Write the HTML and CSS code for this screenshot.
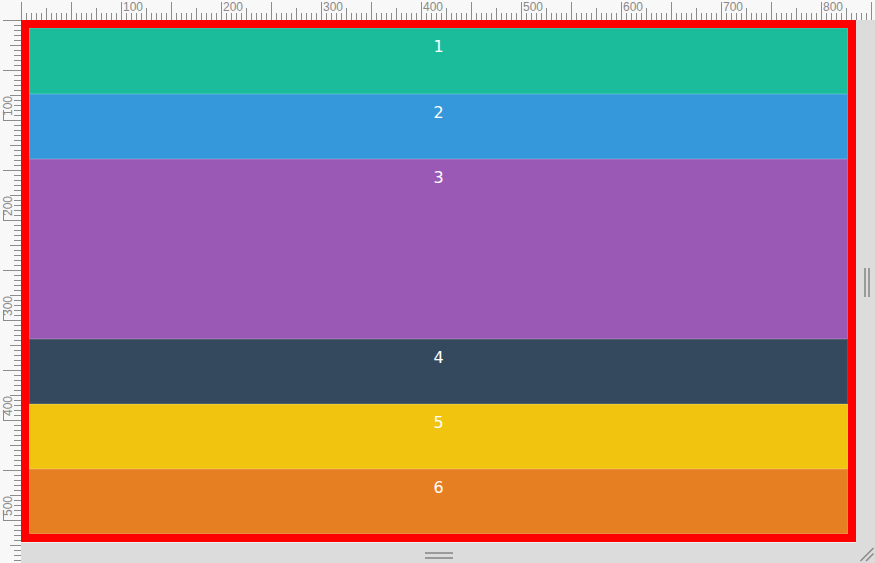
FILE: index.html
```html
<!DOCTYPE html>
<html lang="en">
<head>
<meta charset="utf-8">
<title>Flex rows</title>
<link rel="stylesheet" href="styles.css">
</head>
<body>
<div class="app">
  <div class="corner"></div>
  <div class="ruler-top">
    <span class="hlabel">100</span>
    <span class="hlabel">200</span>
    <span class="hlabel">300</span>
    <span class="hlabel">400</span>
    <span class="hlabel">500</span>
    <span class="hlabel">600</span>
    <span class="hlabel">700</span>
    <span class="hlabel">800</span>
  </div>
  <div class="ruler-left">
    <span class="vlabel">100</span>
    <span class="vlabel">200</span>
    <span class="vlabel">300</span>
    <span class="vlabel">400</span>
    <span class="vlabel">500</span>
  </div>
  <div class="stage">
    <div class="frame">
      <div class="item item-1">1</div>
      <div class="item item-2">2</div>
      <div class="item item-3">3</div>
      <div class="item item-4">4</div>
      <div class="item item-5">5</div>
      <div class="item item-6">6</div>
    </div>
    <div class="side-cell">
      <div class="vhandle"></div>
    </div>
    <div class="bottom-cell">
      <div class="hhandle"></div>
    </div>
    <div class="grip-cell">
      <svg class="grip" width="19" height="21" viewBox="0 0 19 21" aria-hidden="true">
        <line x1="4.5" y1="19" x2="17.5" y2="6" />
        <line x1="10" y1="19" x2="17.5" y2="11.5" />
      </svg>
    </div>
  </div>
</div>
</body>
</html>
```

FILE: styles.css
```css
html, body {
  margin: 0;
  padding: 0;
}

body {
  width: 875px;
  height: 563px;
  overflow: hidden;
  background: #dcdcdc;
  font-family: "Liberation Sans", Arial, sans-serif;
}

.app {
  display: grid;
  grid-template-columns: 21px 854px;
  grid-template-rows: 20px 543px;
  width: 875px;
  height: 563px;
}

.corner {
  background: #f8f8f8;
}

.ruler-top {
  display: flex;
  padding-left: 100px;
  background-color: #f8f8f8;
  background-image:
    repeating-linear-gradient(to right, #8c8c8c 0 1px, transparent 1px 50px),
    repeating-linear-gradient(to right, #8c8c8c 0 1px, transparent 1px 25px),
    repeating-linear-gradient(to right, #8c8c8c 0 1px, transparent 1px 5px);
  background-size: 100% 18px, 100% 12px, 100% 7px;
  background-position: left bottom, left bottom, left bottom;
  background-repeat: no-repeat;
  overflow: hidden;
}

.hlabel {
  flex: 0 0 100px;
  box-sizing: border-box;
  padding-left: 2px;
  font-size: 12px;
  line-height: 14px;
  color: #8a8a8a;
}

.ruler-left {
  display: flex;
  flex-direction: column;
  background-color: #f8f8f8;
  background-image:
    linear-gradient(to bottom, transparent 0 90px, #8c8c8c 90px 100px),
    repeating-linear-gradient(to bottom, #8c8c8c 0 1px, transparent 1px 50px),
    repeating-linear-gradient(to bottom, #8c8c8c 0 1px, transparent 1px 25px),
    repeating-linear-gradient(to bottom, #8c8c8c 0 1px, transparent 1px 5px);
  background-size: 1px 100px, 18px 100%, 11px 100%, 7px 100%;
  background-position: 3px 0, right top, right top, right top;
  background-repeat: repeat-y, no-repeat, no-repeat, no-repeat;
  overflow: hidden;
}

.vlabel {
  flex: 0 0 100px;
  box-sizing: border-box;
  width: 21px;
  height: 100px;
  padding-top: 4px;
  padding-right: 0;
  writing-mode: vertical-rl;
  transform: rotate(180deg);
  font-size: 12px;
  line-height: 16px;
  color: #8a8a8a;
}

.stage {
  display: grid;
  grid-template-columns: 835px 19px;
  grid-template-rows: 522px 21px;
  background: #dcdcdc;
}

.frame {
  display: flex;
  flex-direction: column;
  border: 8px solid #ff0000;
  box-shadow: 0 1px 0 rgba(255, 255, 255, 0.55);
}

.item {
  box-sizing: border-box;
  flex: 0 0 65px;
  padding-top: 10px;
  text-align: center;
  color: #ffffff;
  font-family: "DejaVu Sans", "Liberation Sans", sans-serif;
  font-size: 16px;
  line-height: 18px;
  box-shadow: inset 0 0 0 1px rgba(255, 255, 255, 0.12);
}

.item-1 { flex-basis: 66px; background: #1abc9c; }
.item-2 { background: #3498db; }
.item-3 { flex-basis: 180px; background: #9b59b6; }
.item-4 { background: #34495e; }
.item-5 { background: #f1c40f; }
.item-6 { background: #e67e22; }

.side-cell {
  display: flex;
  align-items: center;
  justify-content: center;
  padding-left: 2px;
  padding-top: 2px;
}

.vhandle {
  width: 2px;
  height: 29px;
  border-left: 2px solid #9a9a9a;
  border-right: 2px solid #9a9a9a;
}

.bottom-cell {
  display: flex;
  justify-content: center;
  align-items: flex-start;
  padding-top: 10px;
}

.hhandle {
  width: 28px;
  height: 3px;
  border-top: 2px solid #9a9a9a;
  border-bottom: 2px solid #9a9a9a;
}

.grip-cell {
  display: flex;
}

.grip line {
  stroke: #8c8c8c;
  stroke-width: 1.6;
}
```
